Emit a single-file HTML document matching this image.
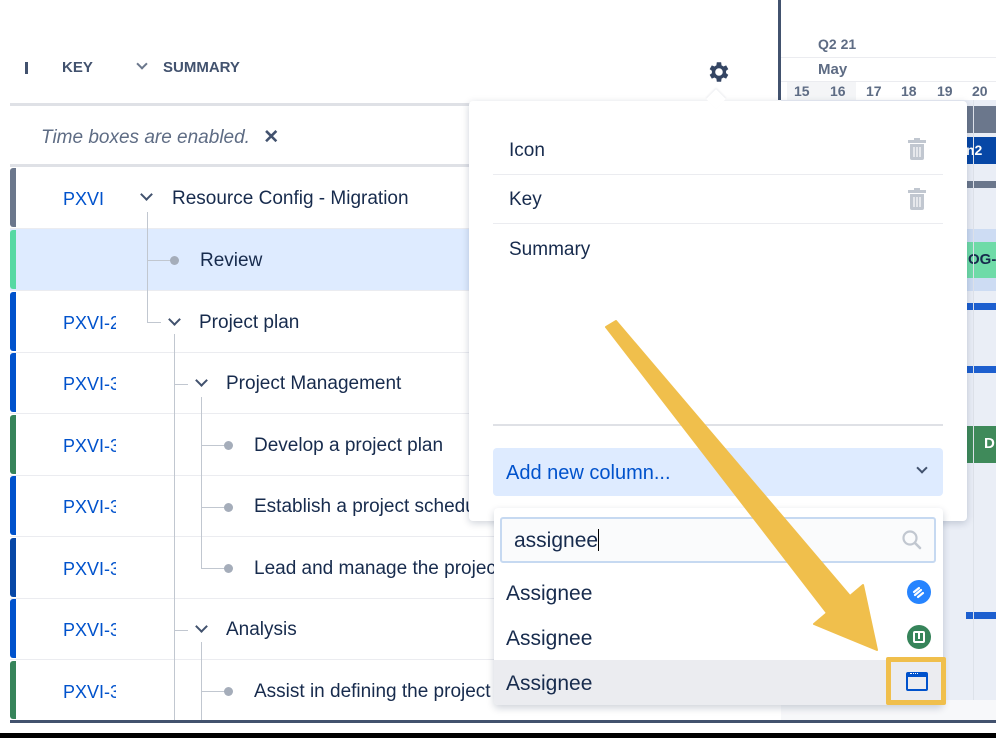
<!DOCTYPE html>
<html><head><meta charset="utf-8"><style>
*{box-sizing:border-box;margin:0;padding:0}
body{width:996px;height:738px;overflow:hidden;background:#fff;font-family:"Liberation Sans",Arial,sans-serif;color:#172b4d;position:relative}
.a{position:absolute}
.hdr{font-size:15px;font-weight:bold;color:#42526e;top:59px}
.row{position:absolute;left:10px;width:760px;height:62px;border-bottom:1px solid #ebecf0}
.bar{position:absolute;left:0;top:1px;bottom:1px;width:6px;border-radius:3px 0 0 3px}
.key{position:absolute;left:53px;top:22px;font-size:18px;color:#0052cc;width:53px;overflow:hidden;white-space:nowrap}
.sum{position:absolute;top:21px;font-size:19px;color:#172b4d;white-space:nowrap}
.vl{position:absolute;width:1px;background:#c1c7d0}
.hl{position:absolute;height:1px;background:#c1c7d0}
.dot{position:absolute;width:9px;height:9px;border-radius:50%;background:#a5adba}
.chev{position:absolute;width:9px;height:9px;border-right:2px solid #42526e;border-bottom:2px solid #42526e;transform:rotate(45deg)}
.d{position:absolute;top:83px;font-size:14px;font-weight:bold;color:#5e6c84}
</style></head><body>
<div class="a" style="left:25px;width:3px;height:12px;top:62px;background:#42526e"></div>
<div class="a hdr" style="left:62px">KEY</div>
<div class="chev" style="left:138px;top:60px;width:8px;height:8px;border-color:#6b778c"></div>
<div class="a hdr" style="left:163px">SUMMARY</div>
<svg class="a" style="left:705px;top:59px" width="26" height="26" viewBox="0 0 24 24"><path fill="#344563" d="M19.4 13a7.5 7.5 0 000-2l2.1-1.6-2-3.5-2.5 1a7 7 0 00-1.700-1L14.9 3h-4l-.4 2.9a7 7 0 00-1.7 1l-2.5-1-2 3.5L6.4 11a7.5 7.5 0 000 2l-2.1 1.6 2 3.5 2.5-1a7 7 0 001.7 1l.4 2.9h4l.4-2.9a7 7 0 001.7-1l2.5 1 2-3.5zM12.9 15.5a3.5 3.5 0 110-7 3.5 3.5 0 010 7z"/></svg>
<div class="a" style="left:10px;top:103px;width:460px;height:3px;background:#dfe1e6"></div>
<div class="a" style="left:41px;top:126px;font-size:19px;font-style:italic;color:#5e6c84">Time boxes are enabled. <span style="font-style:normal;font-weight:bold;color:#42526e;margin-left:8px">✕</span></div>
<div class="a" style="left:10px;top:164px;width:460px;height:3px;background:#dfe1e6"></div>

<div class="row" style="top:167px"><div class="bar" style="background:#6b778c"></div><div class="key">PXVI</div><div class="chev" style="left:132px;top:23px"></div><div class="sum" style="left:162px">Resource Config - Migration</div></div>
<div class="row" style="top:229px;background:#deebff"><div class="bar" style="background:#57d9a3"></div><div class="sum" style="left:190px">Review</div></div>
<div class="row" style="top:291px"><div class="bar" style="background:#0052cc"></div><div class="key">PXVI-2</div><div class="chev" style="left:160px;top:24px"></div><div class="sum" style="left:189px">Project plan</div></div>
<div class="row" style="top:352px"><div class="bar" style="background:#0052cc"></div><div class="key">PXVI-3</div><div class="chev" style="left:187px;top:24px"></div><div class="sum" style="left:216px">Project Management</div></div>
<div class="row" style="top:414px"><div class="bar" style="background:#36845a"></div><div class="key">PXVI-3</div><div class="sum" style="left:244px">Develop a project plan</div></div>
<div class="row" style="top:475px"><div class="bar" style="background:#0052cc"></div><div class="key">PXVI-3</div><div class="sum" style="left:244px">Establish a project schedule</div></div>
<div class="row" style="top:537px"><div class="bar" style="background:#0747a6"></div><div class="key">PXVI-3</div><div class="sum" style="left:244px">Lead and manage the project</div></div>
<div class="row" style="top:598px"><div class="bar" style="background:#0052cc"></div><div class="key">PXVI-3</div><div class="chev" style="left:187px;top:24px"></div><div class="sum" style="left:216px">Analysis</div></div>
<div class="row" style="top:660px;height:61px"><div class="bar" style="background:#36845a"></div><div class="key">PXVI-3</div><div class="sum" style="left:244px">Assist in defining the project</div></div>
<div class="vl" style="left:147px;top:212px;height:110px"></div>
<div class="hl" style="left:147px;top:260px;width:25px"></div><div class="dot" style="left:170px;top:256px"></div>
<div class="hl" style="left:147px;top:322px;width:14px"></div>
<div class="vl" style="left:174px;top:334px;height:388px"></div>
<div class="hl" style="left:174px;top:384px;width:14px"></div>
<div class="vl" style="left:201px;top:397px;height:171px"></div>
<div class="hl" style="left:201px;top:445px;width:25px"></div><div class="dot" style="left:224px;top:441px"></div>
<div class="hl" style="left:201px;top:507px;width:25px"></div><div class="dot" style="left:224px;top:503px"></div>
<div class="hl" style="left:201px;top:568px;width:25px"></div><div class="dot" style="left:224px;top:564px"></div>
<div class="hl" style="left:174px;top:630px;width:14px"></div>
<div class="vl" style="left:201px;top:642px;height:80px"></div>
<div class="hl" style="left:201px;top:691px;width:25px"></div><div class="dot" style="left:224px;top:687px"></div>

<div class="a" style="left:778px;top:0;width:3px;height:100px;background:#42526e"></div>
<div class="a" style="left:818px;top:36px;font-size:14px;font-weight:bold;color:#5e6c84">Q2 21</div>
<div class="a" style="left:781px;top:57px;width:215px;height:1px;background:#ebecf0"></div>
<div class="a" style="left:818px;top:61px;font-size:15px;font-weight:bold;color:#5e6c84">May</div>
<div class="a" style="left:781px;top:81px;width:215px;height:1px;background:#ebecf0"></div>
<div class="a" style="left:787px;top:82px;width:69px;height:18px;background:#f4f5f7"></div>
<div class="d" style="left:794px">15</div><div class="d" style="left:830px">16</div><div class="d" style="left:866px">17</div><div class="d" style="left:901px">18</div><div class="d" style="left:937px">19</div><div class="d" style="left:972px">20</div>
<div class="a" style="left:781px;top:100px;width:215px;height:621px;background:#eaeef6"></div>
<div class="a" style="left:966px;top:106px;width:30px;height:27px;background:#6b778c"></div>
<div class="a" style="left:966px;top:137px;width:30px;height:27px;background:#0747a6;color:#fff;font-weight:bold;font-size:14px;padding:5px 0 0 0">n2</div>
<div class="a" style="left:966px;top:181px;width:30px;height:7px;background:#6b778c"></div>
<div class="a" style="left:966px;top:229px;width:30px;height:62px;background:#cddcf3"></div>
<div class="a" style="left:966px;top:242px;width:30px;height:36px;background:#6fdba8;font-weight:bold;font-size:15px;padding:9px 0 0 2px">OG-</div>
<div class="a" style="left:966px;top:303px;width:30px;height:7px;background:#1d5fcf"></div>
<div class="a" style="left:966px;top:366px;width:30px;height:7px;background:#1d5fcf"></div>
<div class="a" style="left:966px;top:426px;width:30px;height:37px;background:#3f8a5a;color:#fff;font-weight:bold;font-size:15px;padding:9px 0 0 18px">D</div>
<div class="a" style="left:966px;top:612px;width:30px;height:7px;background:#1d5fcf"></div>
<div class="a" style="left:973px;top:100px;width:1px;height:600px;background:#dde2ea"></div>
<div class="a" style="left:781px;top:700px;width:215px;height:21px;background:#f7f8fa"></div>

<div class="a" style="left:10px;top:720px;width:986px;height:3px;background:#42526e"></div>
<div class="a" style="left:0;top:733px;width:996px;height:5px;background:#000"></div>

<div class="a" style="left:469px;top:101px;width:498px;height:420px;background:#fff;border-radius:4px;box-shadow:0 2px 8px rgba(9,30,66,.2)"></div>
<div class="a" style="left:709px;top:92px;width:14px;height:14px;background:#fff;transform:rotate(45deg);box-shadow:-1px -1px 2px rgba(9,30,66,.08)"></div>
<div class="a" style="left:509px;top:140px;font-size:19px">Icon</div>
<div class="a" style="left:493px;top:174px;width:450px;height:1px;background:#ebecf0"></div>
<div class="a" style="left:509px;top:189px;font-size:19px">Key</div>
<div class="a" style="left:493px;top:223px;width:450px;height:1px;background:#ebecf0"></div>
<div class="a" style="left:509px;top:239px;font-size:19px">Summary</div>
<svg class="a" style="left:907px;top:138px" width="20" height="22" viewBox="0 0 20 22"><rect x="1" y="2" width="18" height="3" fill="#c1c7d0"/><rect x="7" y="0" width="6" height="3" fill="#c1c7d0"/><path d="M3 6h14v14a2 2 0 01-2 2H5a2 2 0 01-2-2z" fill="#c1c7d0"/><path d="M7 9v10M10 9v10M13 9v10" stroke="#fff" stroke-width="1.2"/></svg>
<svg class="a" style="left:907px;top:188px" width="20" height="22" viewBox="0 0 20 22"><rect x="1" y="2" width="18" height="3" fill="#c1c7d0"/><rect x="7" y="0" width="6" height="3" fill="#c1c7d0"/><path d="M3 6h14v14a2 2 0 01-2 2H5a2 2 0 01-2-2z" fill="#c1c7d0"/><path d="M7 9v10M10 9v10M13 9v10" stroke="#fff" stroke-width="1.2"/></svg>
<div class="a" style="left:493px;top:424px;width:450px;height:2px;background:#dfe1e6"></div>
<div class="a" style="left:493px;top:448px;width:450px;height:48px;background:#deebff;border-radius:4px"></div>
<div class="a" style="left:506px;top:462px;font-size:20px;color:#0052cc">Add new column...</div>
<div class="chev" style="left:918px;top:464px;width:8px;height:8px;border-color:#42526e"></div>

<div class="a" style="left:494px;top:508px;width:449px;height:197px;background:#fff;border-radius:4px;box-shadow:0 3px 8px rgba(9,30,66,.2)"></div>
<div class="a" style="left:500px;top:517px;width:436px;height:46px;background:#fafbfc;border:2px solid #c6d9f1;border-radius:3px"></div>
<div class="a" style="left:514px;top:529px;font-size:21px;color:#172b4d">assignee<span style="display:inline-block;width:1px;height:22px;background:#000;vertical-align:-4px"></span></div>
<svg class="a" style="left:901px;top:529px" width="22" height="22" viewBox="0 0 22 22"><circle cx="9" cy="9" r="6.5" fill="none" stroke="#c1c7d0" stroke-width="2.2"/><path d="M14 14l5 5" stroke="#c1c7d0" stroke-width="2.6" stroke-linecap="round"/></svg>
<div class="a" style="left:506px;top:582px;font-size:21px">Assignee</div>
<div class="a" style="left:506px;top:627px;font-size:21px">Assignee</div>
<div class="a" style="left:494px;top:660px;width:449px;height:45px;background:#ebecf0;border-radius:0 0 4px 4px"></div>
<div class="a" style="left:506px;top:672px;font-size:21px">Assignee</div>
<div class="a" style="left:907px;top:580px;width:24px;height:24px;border-radius:50%;background:#2684ff"></div>
<svg class="a" style="left:907px;top:580px" width="24" height="24" viewBox="0 0 24 24"><path d="M7 12l5-4M8 15l6-5M11 17l5-4" stroke="#fff" stroke-width="2.2" stroke-linecap="round"/></svg>
<div class="a" style="left:907px;top:625px;width:24px;height:24px;border-radius:50%;background:#36845a"></div>
<div class="a" style="left:913px;top:631px;width:12px;height:12px;border:2px solid #fff;border-radius:2px"></div>
<div class="a" style="left:918px;top:633px;width:2px;height:6px;background:#fff"></div>
<div class="a" style="left:886px;top:657px;width:60px;height:48px;border:5px solid #f0bf4c;border-radius:2px"></div>
<div class="a" style="left:906px;top:672px;width:22px;height:19px;border:2px solid #0052cc;border-radius:2px;border-top-width:5px"></div>
<div class="a" style="left:910px;top:673px;width:8px;height:1px;border-top:1px dotted #fff"></div>

<svg class="a" style="left:0;top:0" width="996" height="738"><polygon points="606,327 616,321 850,596 863,585 877,650 814,624 827,613" fill="#f0bf4c" stroke="#f0bf4c" stroke-width="2" stroke-linejoin="round"/></svg>
</body></html>
